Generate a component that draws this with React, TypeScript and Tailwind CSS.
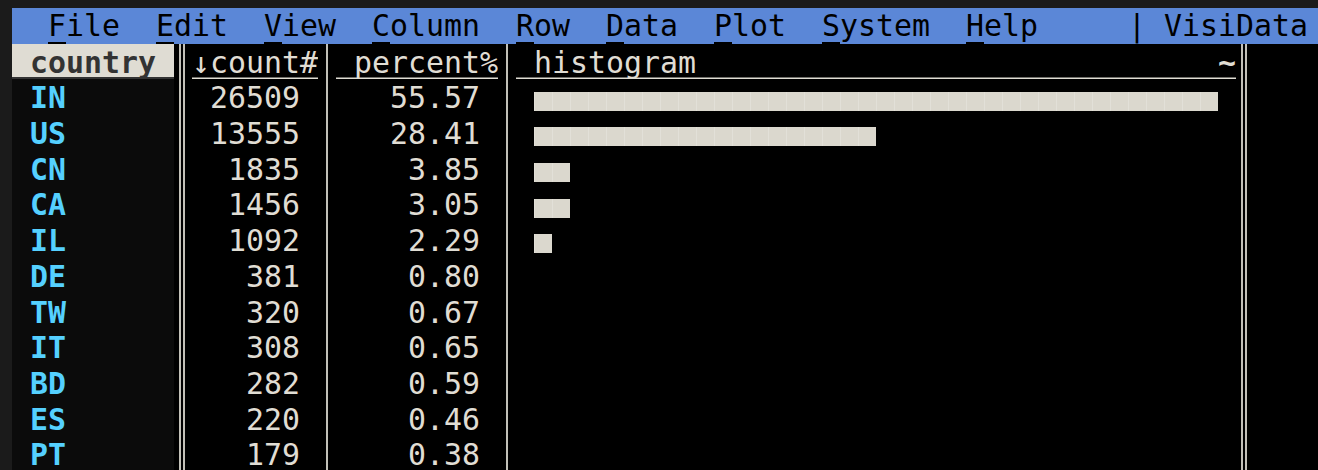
import React from "react";

const rows: [string, string, string, number][] = [
  ["IN", "26509", "55.57", 38],
  ["US", "13555", "28.41", 19],
  ["CN", "1835", "3.85", 2],
  ["CA", "1456", "3.05", 2],
  ["IL", "1092", "2.29", 1],
  ["DE", "381", "0.80", 0],
  ["TW", "320", "0.67", 0],
  ["IT", "308", "0.65", 0],
  ["BD", "282", "0.59", 0],
  ["ES", "220", "0.46", 0],
  ["PT", "179", "0.38", 0],
];

const menu: [string, string][] = [
  ["  ", "File"],
  ["  ", "Edit"],
  ["  ", "View"],
  ["  ", "Column"],
  ["  ", "Row"],
  ["  ", "Data"],
  ["  ", "Plot"],
  ["  ", "System"],
  ["  ", "Help"],
];

function SingleSep() {
  return (
    <div className="flex w-[18px] shrink-0 justify-center bg-black">
      <div className="h-full w-[1.5px] bg-[#c2c0b8]" />
    </div>
  );
}

function DoubleSep() {
  return (
    <div className="flex w-[18px] shrink-0 gap-[2.6px] bg-black pl-[5.4px]">
      <div className="h-full w-[1.5px] bg-[#c2c0b8]" />
      <div className="h-full w-[1.5px] bg-[#c2c0b8]" />
    </div>
  );
}

export default function App() {
  return (
    <div className="flex h-[470px] w-[1318px] flex-col overflow-hidden bg-[#1b1b1b] pl-[12px] pt-[8px] font-['DejaVu_Sans_Mono','Liberation_Mono',monospace] text-[29.9px] leading-[35.7px] text-[#e0ddd4]">
      <div className="flex h-[35.7px] shrink-0 whitespace-pre bg-[#5b87d7] text-black">
        {menu.map(([gap, word]) => (
          <React.Fragment key={word}>
            <span>{gap}</span>
            <span className="shadow-[inset_0_-2px_0_#000]">{word[0]}</span>
            <span>{word.slice(1)}</span>
          </React.Fragment>
        ))}
        <span>{"     | VisiData"}</span>
      </div>
      <div className="flex min-h-0 flex-1 bg-black">
        {/* country */}
        <div className="flex w-[162px] shrink-0 flex-col bg-[#0b0b0b]">
          <div className="h-[35.7px] shrink-0 whitespace-pre bg-[#dfdcd3] pt-[1px] font-bold text-[#333333] shadow-[inset_0_-2px_0_#333333]">
            {" country"}
          </div>
          {rows.map((r) => (
            <div key={r[0]} className="h-[35.7px] shrink-0 whitespace-pre pt-[1px] font-bold text-[#55d0ff]">
              {" " + r[0]}
            </div>
          ))}
        </div>
        <DoubleSep />
        {/* count */}
        <div className="flex w-[126px] shrink-0 flex-col">
          <div className="h-[35.7px] shrink-0 whitespace-pre pt-[1px] shadow-[inset_0_-1.5px_0_#e0ddd4]">
            {"↓count#"}
          </div>
          {rows.map((r) => (
            <div key={r[0]} className="h-[35.7px] shrink-0 pr-[18px] pt-[1px] text-right">
              {r[1]}
            </div>
          ))}
        </div>
        <SingleSep />
        {/* percent */}
        <div className="flex w-[162px] shrink-0 flex-col">
          <div className="h-[35.7px] shrink-0 whitespace-pre pt-[1px] shadow-[inset_0_-1.5px_0_#e0ddd4]">
            {" percent%"}
          </div>
          {rows.map((r) => (
            <div key={r[0]} className="h-[35.7px] shrink-0 pr-[18px] pt-[1px] text-right">
              {r[2]}
            </div>
          ))}
        </div>
        <SingleSep />
        {/* histogram */}
        <div className="flex w-[720px] shrink-0 flex-col">
          <div className="flex h-[35.7px] shrink-0 justify-between pl-[18px] pt-[1px] shadow-[inset_0_-1.5px_0_#e0ddd4]">
            <span>histogram</span>
            <span className="font-bold">~</span>
          </div>
          {rows.map((r) => (
            <div key={r[0]} className="h-[35.7px] shrink-0 pl-[18px]">
              {r[3] > 0 && (
                <div
                  className="mt-[12.3px] h-[19px] bg-[repeating-linear-gradient(90deg,#e2e0d8_0px,#e2e0d8_1px,#dbd8ce_1px,#dbd8ce_18px)]"
                  style={{ width: r[3] * 18 }}
                />
              )}
            </div>
          ))}
        </div>
        <DoubleSep />
        <div className="flex-1 bg-black" />
      </div>
    </div>
  );
}
